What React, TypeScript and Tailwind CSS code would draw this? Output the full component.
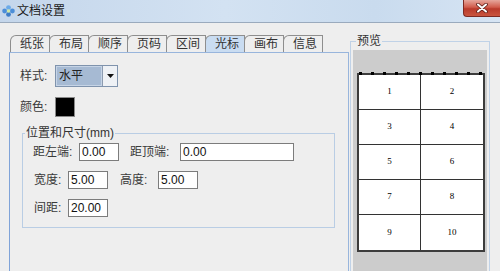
import React from 'react';

const tabs = ['纸张', '布局', '顺序', '页码', '区间', '光标', '画布', '信息'];
const cells = [1, 2, 3, 4, 5, 6, 7, 8, 9, 10];

function AppIcon() {
  return (
    <svg width="13" height="12" viewBox="0 0 13 12">
      <circle cx="6.5" cy="2.6" r="2.4" fill="#6aaae8" />
      <circle cx="2.6" cy="6" r="2.4" fill="#4b8ed8" />
      <circle cx="10.4" cy="6" r="2.4" fill="#4b8ed8" />
      <circle cx="6.5" cy="9.4" r="2.4" fill="#3c7cc6" />
      <circle cx="6.5" cy="6" r="1.7" fill="#cfe8a4" />
    </svg>
  );
}

function Field({ value, w }: { value: string; w: string }) {
  return (
    <input
      readOnly
      value={value}
      className={`${w} h-[18px] border border-[#7c7c7c] bg-white pl-[2px] text-[12px] leading-[16px] text-[#111] outline-none`}
    />
  );
}

export default function App() {
  return (
    <div className="w-[500px] h-[271px] overflow-hidden bg-[#eeeeee] font-['Liberation_Sans','Noto_Sans_CJK_SC',sans-serif] text-[12px] text-[#3a3a3a] flex flex-col">
      {/* title bar */}
      <div className="h-[23px] shrink-0 flex items-start border-b border-[#9aaabd] bg-[linear-gradient(90deg,#c4d6eb,#d3e2f2_45%,#c9dbee_75%,#d6e4f3)]">
        <div className="mt-[5px] ml-[2px]">
          <AppIcon />
        </div>
        <span className="ml-[2px] mt-[4px] leading-[14px] text-[#1b1b1b]">文档设置</span>
        <div className="ml-auto w-[37px] h-[17px] rounded-bl-[4px] border border-t-0 border-r-0 border-[#7d2a22] bg-[linear-gradient(#e6a79c,#d15c4c_45%,#b93a2b_55%,#c9553f)] flex items-center justify-center">
          <svg width="12" height="10" viewBox="0 0 12 10">
            <path d="M2 1.5 L10 8.5 M10 1.5 L2 8.5" stroke="#5a1d16" strokeWidth="3.6" strokeLinecap="round" />
            <path d="M2 1.5 L10 8.5 M10 1.5 L2 8.5" stroke="#ffffff" strokeWidth="2" strokeLinecap="round" />
          </svg>
        </div>
      </div>

      {/* body */}
      <div className="flex flex-row pl-[9px]">
        {/* left: tabs + panel */}
        <div className="w-[340px] flex flex-col pt-[12px]">
          <div className="flex flex-row pl-[1px] h-[17px]">
            {tabs.map((t, i) => (
              <div
                key={t}
                className={`w-[40px] h-[17px] ${i > 0 ? '-ml-px' : ''} rounded-tl-[6px] border border-b-0 border-[#8e8e8e] pl-[9px] leading-[16px] text-[#333] ${t === '光标' ? 'bg-[#c9dcf1]' : 'bg-[#eeeeee]'}`}
              >
                {t}
              </div>
            ))}
          </div>
          <div className="h-[230px] border border-[#98b5dc] border-l-[#7fa3d8] pl-[10px] pt-[12px]">
            <div className="flex items-center h-[22px]">
              <span className="w-[35px] leading-[14px]">样式:</span>
              <div className="w-[63px] h-[22px] flex border border-[#7f93ad]">
                <div className="flex-1 bg-[#a6bad3] border border-[#c6d4e6] pl-[2px] leading-[18px] text-[#222]">水平</div>
                <div className="w-[15px] border-l border-[#8c9bb0] bg-[#eef1f5] flex items-center justify-center">
                  <svg width="7" height="4" viewBox="0 0 7 4">
                    <path d="M0 0 H7 L3.5 4 Z" fill="#111" />
                  </svg>
                </div>
              </div>
            </div>
            <div className="flex items-center h-[20px] mt-[10px]">
              <span className="w-[35px] leading-[14px]">颜色:</span>
              <div className="w-[20px] h-[20px] bg-black border border-[#8a8a8a]" />
            </div>
            <fieldset className="mt-[9px] ml-[2px] mr-[13px] border border-[#b9cde4] pb-[10px]">
              <legend className="ml-[2px] px-[1px] leading-[14px] text-[#333]">位置和尺寸(mm)</legend>
              <div className="flex flex-col gap-[10px] pt-[3px]">
                <div className="flex items-center h-[18px] pl-[10px]">
                  <span className="w-[46px] leading-[14px]">距左端:</span>
                  <Field value="0.00" w="w-[40px]" />
                  <span className="ml-[11px] w-[50px] leading-[14px]">距顶端:</span>
                  <Field value="0.00" w="w-[114px]" />
                </div>
                <div className="flex items-center h-[18px] pl-[11px]">
                  <span className="w-[34px] leading-[14px]">宽度:</span>
                  <Field value="5.00" w="w-[40px]" />
                  <span className="ml-[12px] w-[38px] leading-[14px]">高度:</span>
                  <Field value="5.00" w="w-[40px]" />
                </div>
                <div className="flex items-center h-[18px] pl-[11px]">
                  <span className="w-[34px] leading-[14px]">间距:</span>
                  <Field value="20.00" w="w-[40px]" />
                </div>
              </div>
            </fieldset>
          </div>
        </div>

        {/* right: preview */}
        <fieldset className="ml-[1px] mt-[11px] w-[140px] h-[260px] border border-[#c0d2e7] px-[2px]">
          <legend className="ml-[3px] px-[1px] leading-[14px] text-[#333]">预览</legend>
          <div className="mt-[2px] h-[250px] bg-[#cccccc] pt-[23px] pl-[4px]">
            <div className="relative w-[128px] grid grid-cols-2 border-2 border-[#3c3c3c] bg-white">
              {cells.map((n, i) => (
                <div
                  key={n}
                  className={`h-[35px] flex items-center justify-center font-['Liberation_Serif',serif] text-[9px] text-black ${i % 2 === 0 ? 'border-r border-[#333]' : ''} ${i < 8 ? 'border-b border-[#333]' : ''}`}
                >
                  {n}
                </div>
              ))}
              <div className="absolute -top-[3px] left-0 right-[1px] flex justify-between">
                {Array.from({ length: 11 }).map((_, i) => (
                  <div key={i} className="w-[3px] h-[3px] bg-black" />
                ))}
              </div>
            </div>
          </div>
        </fieldset>
      </div>
    </div>
  );
}
